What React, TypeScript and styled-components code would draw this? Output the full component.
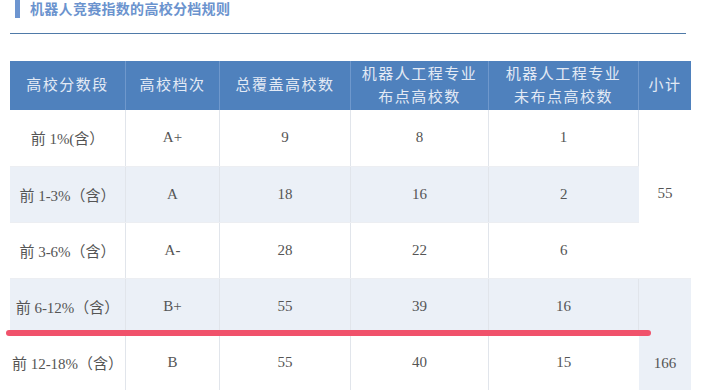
import React from 'react'
import styled, { createGlobalStyle } from 'styled-components'

const GlobalStyle = createGlobalStyle`
  body {
    margin: 0;
    background: #fff;
    font-family: "Liberation Serif", "Noto Sans CJK SC", serif;
  }
`

const Page = styled.div`
  position: relative;
  width: 702px;
  height: 390px;
  overflow: hidden;
  padding: 0 16px 0 10px;
  box-sizing: border-box;
`

const TitleRow = styled.div`
  display: flex;
  align-items: flex-start;
  gap: 10px;
  height: 18px;
  padding-left: 5px;
`

const TitleBar = styled.span`
  width: 5px;
  height: 18px;
  background: #6d95d0;
`

const TitleText = styled.h2`
  margin: 1px 0 0;
  font-family: "Noto Sans CJK SC", sans-serif;
  font-size: 14px;
  line-height: 15px;
  font-weight: 700;
  color: #6b93ce;
  letter-spacing: 0.3px;
`

const Rule = styled.hr`
  margin: 15px 0 0;
  border: 0;
  height: 1px;
  background: #4f7aa8;
`

const Table = styled.table`
  margin-top: 27px;
  width: 676px;
  border-collapse: collapse;
  table-layout: fixed;
`

const HeadCell = styled.th<{ $w: number }>`
  width: ${p => p.$w}px;
  height: 49px;
  padding: 0;
  background: #4f81bd;
  color: #e3eaf5;
  font-weight: 400;
  font-size: 15px;
  line-height: 23px;
  letter-spacing: 1.5px;
  text-align: center;
  border-right: 1px solid #6f98cc;
  &:last-child { border-right: 0; }
`

const Row = styled.tr<{ $shade: boolean }>`
  height: 56px;
  background: ${p => (p.$shade ? '#ebf0f7' : '#fff')};
`

const Cell = styled.td<{ $shade?: boolean; $push?: boolean }>`
  padding: 0;
  text-align: center;
  font-size: 15px;
  color: #555;
  border-right: 1px solid #e1e5eb;
  border-bottom: 1px solid #eceef2;
  white-space: nowrap;
  ${p => p.$shade !== undefined && `background: ${p.$shade ? '#ebf0f7' : '#fff'};`}
  ${p => p.$push && 'vertical-align: bottom; padding-bottom: 18px;'}
  &:last-child { border-right: 0; }
`

const Mark = styled.div`
  position: absolute;
  left: 6px;
  top: 330px;
  width: 645px;
  height: 6px;
  border-radius: 3px;
  background: #f0526b;
`

const columns = [
  { label: '高校分数段', w: 115 },
  { label: '高校档次', w: 93 },
  { label: '总覆盖高校数', w: 130 },
  { label: '机器人工程专业\n布点高校数', w: 137 },
  { label: '机器人工程专业\n未布点高校数', w: 149 },
  { label: '小计', w: 52 },
]

const rows = [
  { band: '前 1%(含）', tier: 'A+', total: 9, yes: 8, no: 1 },
  { band: '前 1-3%（含）', tier: 'A', total: 18, yes: 16, no: 2 },
  { band: '前 3-6%（含）', tier: 'A-', total: 28, yes: 22, no: 6 },
  { band: '前 6-12%（含）', tier: 'B+', total: 55, yes: 39, no: 16 },
  { band: '前 12-18%（含）', tier: 'B', total: 55, yes: 40, no: 15 },
]

// the second subtotal continues below the visible rows
const subtotals: Record<number, { value: number; span: number; push?: boolean }> = {
  0: { value: 55, span: 3 },
  3: { value: 166, span: 2, push: true },
}

const App: React.FC = () => {
  return (
    <Page>
      <GlobalStyle />
      <TitleRow>
        <TitleBar />
        <TitleText>机器人竞赛指数的高校分档规则</TitleText>
      </TitleRow>
      <Rule />
      <Table>
        <thead>
          <tr>
            {columns.map(c => (
              <HeadCell key={c.label} $w={c.w}>
                {c.label.split('\n').map((line, i) => (
                  <div key={i}>{line}</div>
                ))}
              </HeadCell>
            ))}
          </tr>
        </thead>
        <tbody>
          {rows.map((r, i) => (
            <Row key={r.band} $shade={i % 2 === 1}>
              <Cell>{r.band}</Cell>
              <Cell>{r.tier}</Cell>
              <Cell>{r.total}</Cell>
              <Cell>{r.yes}</Cell>
              <Cell>{r.no}</Cell>
              {subtotals[i] && (
                <Cell
                  rowSpan={subtotals[i].span}
                  $shade={i % 2 === 1}
                  $push={subtotals[i].push}
                >
                  {subtotals[i].value}
                </Cell>
              )}
            </Row>
          ))}
        </tbody>
      </Table>
      <Mark />
    </Page>
  )
}

export default App
